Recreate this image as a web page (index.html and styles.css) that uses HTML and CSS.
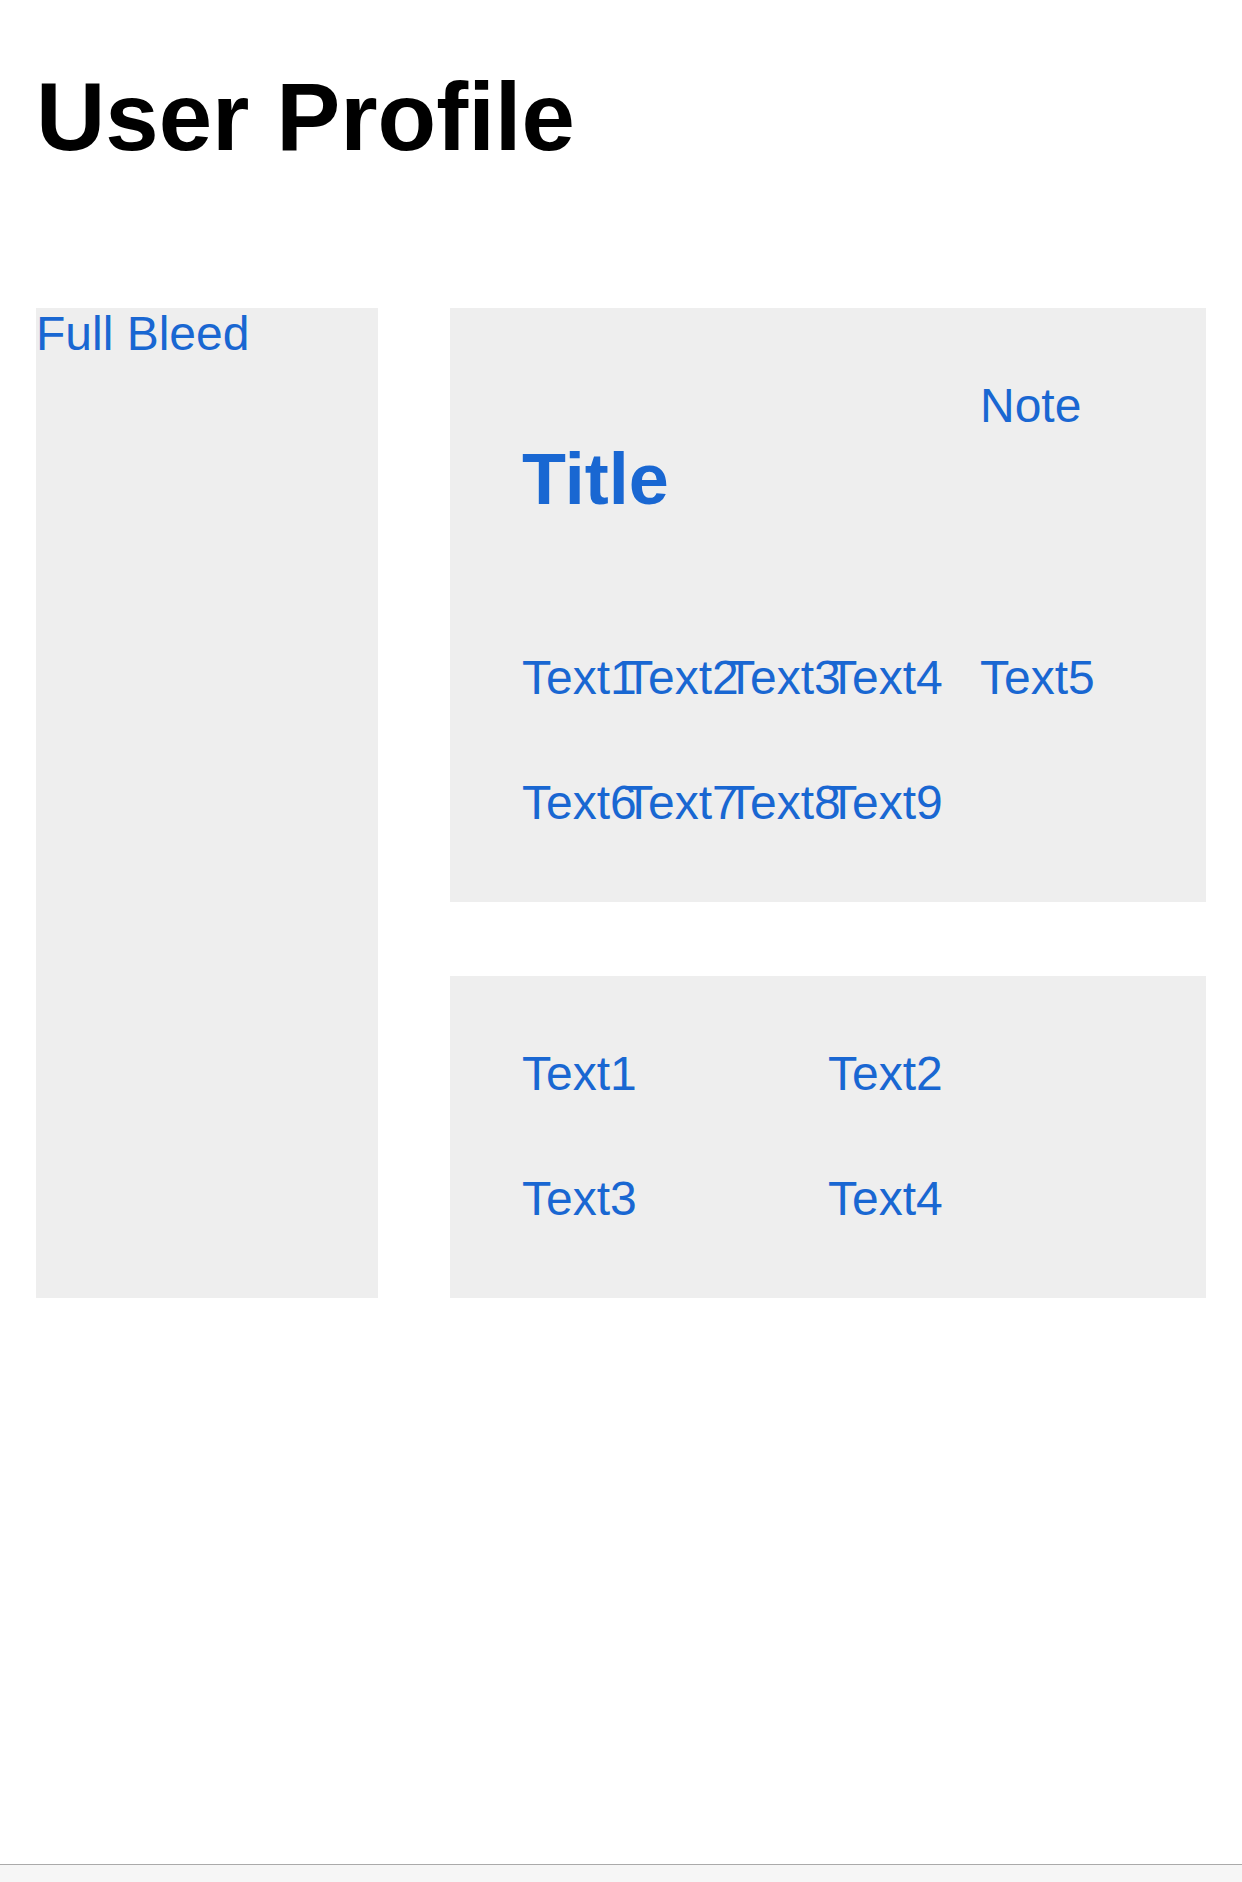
FILE: index.html
```html
<!DOCTYPE html>
<html lang="en">
<head>
<meta charset="utf-8">
<title>User Profile</title>
<link rel="stylesheet" href="styles.css">
</head>
<body>
  <div class="page">
    <h1 class="page-title">User Profile</h1>
    <div class="layout">
      <div class="bleed"><span class="bleed-label">Full Bleed</span></div>
      <div class="stack">
        <section class="card card-main">
          <h2 class="card-title">Title</h2>
          <div class="note">Note</div>
          <div class="text-row">
            <span>Text1</span><span>Text2</span><span>Text3</span><span>Text4</span>
          </div>
          <div class="side">Text5</div>
          <div class="text-row">
            <span>Text6</span><span>Text7</span><span>Text8</span><span>Text9</span>
          </div>
        </section>
        <section class="card card-grid">
          <span>Text1</span>
          <span>Text2</span>
          <span>Text3</span>
          <span>Text4</span>
        </section>
      </div>
    </div>
  </div>
  <div class="bottom-bar"></div>
</body>
</html>
```

FILE: styles.css
```css
html, body {
  margin: 0;
  padding: 0;
}

body {
  font-family: "Liberation Sans", Arial, sans-serif;
  background: #ffffff;
  min-height: 100vh;
  display: flex;
  flex-direction: column;
}

.page {
  flex: 1;
  padding: 62px 36px 0;
}

.page-title {
  margin: 0 0 136px;
  font-size: 96px;
  line-height: 110px;
  font-weight: 700;
  color: #000000;
}

.layout {
  display: grid;
  grid-template-columns: 342px 756px;
  column-gap: 72px;
}

.bleed {
  background: #eeeeee;
}

.bleed-label {
  display: block;
  font-size: 48px;
  line-height: 52px;
  color: #1967d2;
}

.stack {
  display: flex;
  flex-direction: column;
  gap: 74px;
}

.card {
  background: #eeeeee;
  padding: 70px 72px 72px;
  display: grid;
  font-size: 48px;
  color: #1967d2;
}

.card-main {
  grid-template-columns: 408px 1fr;
  grid-template-rows: 202px auto auto;
  column-gap: 50px;
  row-gap: 70px;
}

.card-title {
  margin: 0;
  font-size: 72px;
  font-weight: 700;
  align-self: center;
  color: #1967d2;
}

.note {
  align-self: start;
}

.text-row {
  display: grid;
  grid-template-columns: repeat(4, 102px);
  white-space: nowrap;
}

.card-grid {
  grid-template-columns: 1fr 1fr;
  row-gap: 70px;
}

.bottom-bar {
  height: 17px;
  border-top: 1px solid #aaaaaa;
  background: #f6f6f6;
}
```
